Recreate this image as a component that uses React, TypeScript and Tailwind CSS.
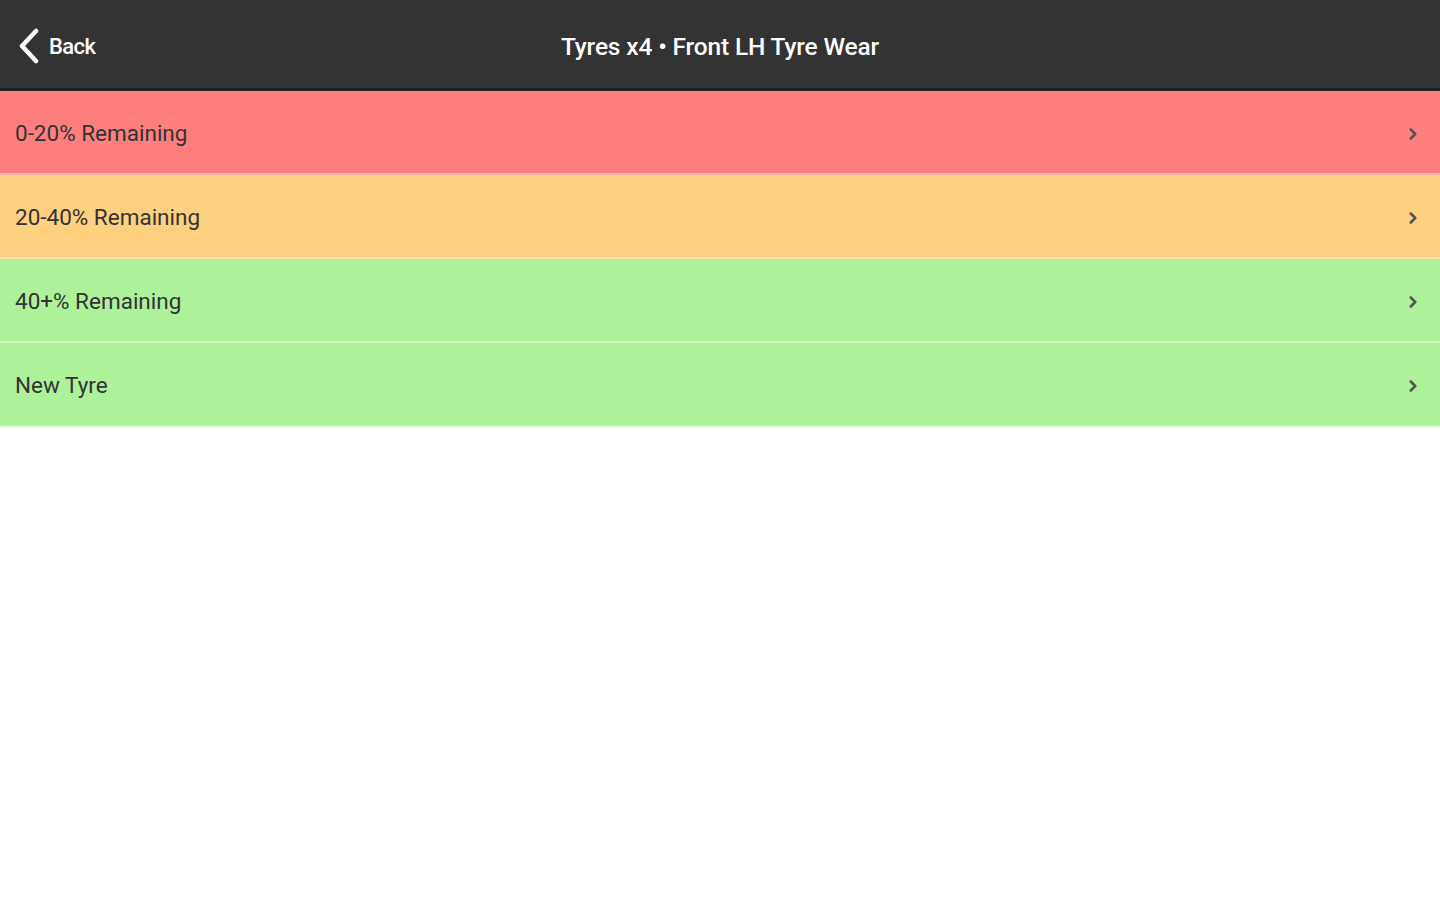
import { ChevronRight } from "lucide-react"

type rowType = {
  id: number
  name: string
  bg: string
}

const rows: rowType[] = [
  { id: 1, name: "0-20% Remaining", bg: "bg-[#ff7f7f]" },
  { id: 2, name: "20-40% Remaining", bg: "bg-[#ffd07f]" },
  { id: 3, name: "40+% Remaining", bg: "bg-[#adf29a]" },
  { id: 4, name: "New Tyre", bg: "bg-[#adf29a]" },
]

export default function App() {
  return (
    <div className="min-h-[900px] w-full bg-white font-['Roboto',sans-serif]">
      {/* Top bar */}
      <div className="relative flex h-[91px] items-center justify-center border-b-[3px] border-[#202020] bg-[#333333] pt-[6px]">
        <button className="absolute left-[16px] top-[28px] flex items-center gap-[7px] text-white">
          <svg width="26" height="36" viewBox="0 0 26 36" fill="none">
            <polyline
              points="20,3 6,18 20,33"
              stroke="currentColor"
              strokeWidth="4.5"
              strokeLinecap="round"
              strokeLinejoin="round"
            />
          </svg>
          <span className="text-[22px] font-medium tracking-[-0.6px]">Back</span>
        </button>
        <h1 className="text-[24.5px] font-medium tracking-[-0.15px] text-white">
          Tyres x4 • Front LH Tyre Wear
        </h1>
      </div>

      {/* Options */}
      <div className="flex flex-col">
        {rows.map((item) => (
          <div
            key={item.id}
            className={`flex h-[84px] items-center justify-between border-b-[2px] border-white/40 pl-[15px] pr-[18px] pt-[3px] ${item.bg}`}
          >
            <span className="text-[22.5px] text-[#333333]">{item.name}</span>
            <ChevronRight className="h-[18px] w-[18px] text-[#555555]" strokeWidth={3.5} />
          </div>
        ))}
      </div>
    </div>
  )
}
